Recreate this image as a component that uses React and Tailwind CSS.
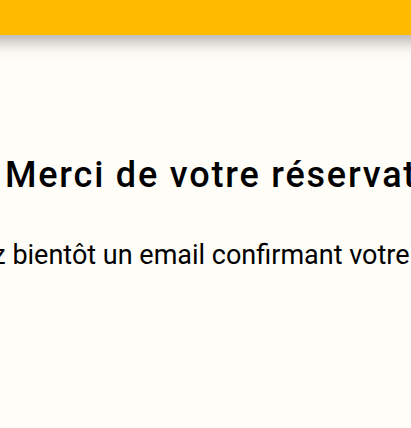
import React from 'react';

// Booking confirmation page: yellow top bar, then the thank-you message
// (the window only shows part of each line, both run past the edges).
const App = () => {
    return (
        <div className="min-h-[428px] w-[411px] overflow-hidden bg-[#fffdf8] font-['Roboto',sans-serif] text-black">
            {/* Top bar (wider than the window so its shadow stays even at the edges) */}
            <div className="relative z-10 -mx-5 h-[35px] bg-[#ffbb00] shadow-[0_7px_16px_rgba(0,0,0,0.3)]" />

            {/* Message */}
            <div className="flex flex-col items-start pt-[118px]">
                <h1 className="whitespace-nowrap pl-[5px] text-[36px] font-medium leading-[44px] tracking-[1.8px]">
                    Merci de votre réservation !
                </h1>
                <p className="-ml-[163px] mt-[42px] whitespace-nowrap text-[27px] leading-[32px]">
                    Vous recevrez bientôt un email confirmant votre réservation.
                </p>
            </div>
        </div>
    );
};

export default App;
